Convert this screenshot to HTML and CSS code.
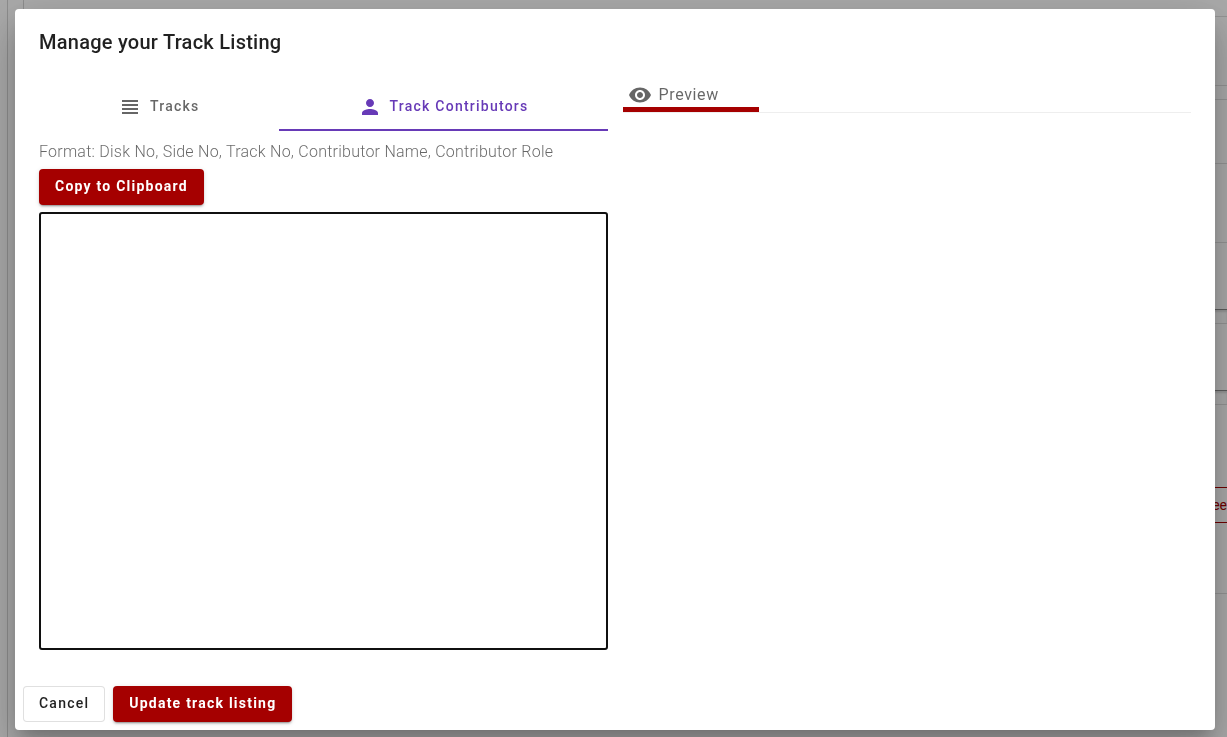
FILE: index.html
```html
<!DOCTYPE html>
<html lang="en">
<head>
<meta charset="utf-8">
<title>Manage your Track Listing</title>
<link rel="stylesheet" href="styles.css">
</head>
<body>
<div class="page" aria-hidden="true">
  <div class="page-card">
    <div class="band band-header"></div>
    <div class="band band-gap"></div>
    <div class="band band-row"></div>
    <div class="band band-wide"></div>
    <div class="band band-field"></div>
    <div class="band band-gap band-shaded"></div>
    <div class="band band-field"></div>
    <div class="band band-gap band-shaded"></div>
    <div class="band band-action"><span class="page-action">ee</span></div>
    <div class="band"></div>
  </div>
</div>
<div class="overlay">
  <div class="dialog" role="dialog" aria-labelledby="dialog-title">
    <h2 class="dialog-title" id="dialog-title">Manage your Track Listing</h2>
    <div class="dialog-content">
      <section class="editor">
        <div class="tabs" role="tablist">
          <button class="tab" type="button" role="tab" aria-selected="false">
            <svg class="icon" viewBox="0 0 24 24" aria-hidden="true"><path d="M4 16h16v-2H4v2zm0 4h16v-2H4v2zm0-8h16v-2H4v2zm0-6v2h16V6H4z"/></svg>
            <span>Tracks</span>
          </button>
          <button class="tab tab-active" type="button" role="tab" aria-selected="true">
            <svg class="icon" viewBox="0 0 24 24" aria-hidden="true"><path d="M12 13c2.210 0 4-1.790 4-4s-1.790-4-4-4-4 1.790-4 4 1.790 4 4 4zm0 2c-2.670 0-8 1.340-8 4v2h16v-2c0-2.660-5.330-4-8-4z"/></svg>
            <span>Track Contributors</span>
          </button>
        </div>
        <label class="format" for="contributors">Format: Disk No, Side No, Track No, Contributor Name, Contributor Role</label>
        <button class="button button-primary" type="button">Copy to Clipboard</button>
        <textarea class="listing" id="contributors"></textarea>
      </section>
      <section class="preview">
        <div class="preview-bar">
          <h3 class="preview-title">
            <svg class="icon" viewBox="0 0 24 24" aria-hidden="true"><path d="M12 4.500C7 4.500 2.730 7.610 1 12c1.730 4.390 6 7.500 11 7.500s9.270-3.110 11-7.500c-1.730-4.390-6-7.500-11-7.500zM12 17c-2.760 0-5-2.240-5-5s2.240-5 5-5 5 2.240 5 5-2.240 5-5 5zm0-8c-1.660 0-3 1.340-3 3s1.340 3 3 3 3-1.340 3-3-1.340-3-3-3z"/></svg>
            <span>Preview</span>
          </h3>
        </div>
      </section>
    </div>
    <div class="dialog-actions">
      <button class="button button-outline" type="button">Cancel</button>
      <button class="button button-primary" type="button">Update track listing</button>
    </div>
  </div>
</div>
</body>
</html>
```
FILE: styles.css
```css
* { box-sizing: border-box; }

body {
  margin: 0;
  height: 100vh;
  overflow: hidden;
  background: #fafafa;
  color: rgba(0, 0, 0, 0.87);
  font-family: Roboto, "Liberation Sans", sans-serif;
}

.page {
  height: 100%;
  margin-left: 7px;
  border-left: 1px solid #d0d0d0;
}

.page-card {
  display: flex;
  flex-direction: column;
  height: 100%;
  padding: 16px 0 0 16px;
  background: linear-gradient(#d0d0d0, #d0d0d0) 15px 0 / 1px 12px no-repeat;
}

.band {
  flex: 1;
  border-top: 1px solid #dadada;
}
.band-header { flex: 0 0 69px; }
.band-gap { flex: 0 0 14px; }
.band-row { flex: 0 0 64px; }
.band-wide { flex: 0 0 79px; }
.band-field { flex: 0 0 67px; }
.band-shaded {
  border-top: 1px solid #888;
  box-shadow: inset 0 2px 2px #d8d8d8;
}
.band-action {
  display: flex;
  justify-content: flex-end;
  flex: 0 0 189px;
  padding-top: 82px;
}

.page-action {
  height: 36px;
  padding-left: 20px;
  border: solid #a50000;
  border-width: 1px 0;
  color: #a50000;
  font-size: 14px;
  line-height: 34px;
}

.overlay {
  position: fixed;
  inset: 0;
  display: flex;
  padding: 9px 12px 7px 15px;
  background: rgba(0, 0, 0, 0.32);
}

.dialog {
  display: flex;
  flex: 1;
  flex-direction: column;
  border-radius: 4px;
  background: #fff;
  box-shadow: 0 11px 15px -7px rgba(0, 0, 0, 0.2),
    0 24px 38px 3px rgba(0, 0, 0, 0.14),
    0 9px 46px 8px rgba(0, 0, 0, 0.12);
}

.dialog-title {
  margin: 0;
  padding: 17px 24px 25px;
  font-size: 20px;
  font-weight: 500;
  line-height: 32px;
  letter-spacing: 0.0125em;
}

.dialog-content {
  display: grid;
  grid-template-columns: 1fr 1fr;
  flex: 1;
  gap: 15px;
  padding: 0 24px;
}

.editor {
  display: flex;
  flex-direction: column;
  align-items: flex-start;
}

.tabs {
  display: flex;
  width: 100%;
  height: 48px;
}

.tab {
  display: flex;
  flex: 1 1 auto;
  align-items: center;
  justify-content: center;
  gap: 8px;
  padding: 0 24px;
  border: 0;
  border-bottom: 2px solid transparent;
  background: none;
  color: rgba(0, 0, 0, 0.6);
  font: 500 14px/20px Roboto, "Liberation Sans", sans-serif;
  letter-spacing: 0.088em;
}
.tab-active {
  border-color: #673ab7;
  color: #673ab7;
}

.icon {
  width: 24px;
  height: 24px;
  fill: currentColor;
}

.format {
  padding: 9px 0 5px;
  color: rgba(0, 0, 0, 0.6);
  font-size: 16px;
  font-weight: 300;
  line-height: 24px;
  letter-spacing: 0.015em;
}

.button {
  height: 36px;
  padding: 0 16px 2px;
  border: 0;
  border-radius: 4px;
  font: 500 14px/34px Roboto, "Liberation Sans", sans-serif;
  letter-spacing: 0.088em;
}
.button-primary {
  background: #a50000;
  color: #fff;
  font-weight: 700;
  box-shadow: 0 3px 1px -2px rgba(0, 0, 0, 0.2),
    0 2px 2px rgba(0, 0, 0, 0.14),
    0 1px 5px rgba(0, 0, 0, 0.12);
}
.button-outline {
  padding: 0 15px 2px;
  border: 1px solid rgba(0, 0, 0, 0.12);
  background: #fff;
  color: rgba(0, 0, 0, 0.87);
  line-height: 32px;
}

.listing {
  flex: 1;
  width: 100%;
  margin-top: 7px;
  border: 2px solid #101010;
  border-radius: 3px;
  outline: 0;
  background: #fff;
  resize: none;
}

.preview-bar {
  display: flex;
  border-bottom: 1px solid #eee;
}

.preview-title {
  display: flex;
  align-items: center;
  gap: 7px;
  width: 136px;
  height: 29px;
  margin: 0;
  padding-left: 5px;
  border-bottom: 5px solid #a50000;
  color: rgba(0, 0, 0, 0.6);
  font-size: 16px;
  font-weight: 400;
  line-height: 22px;
  letter-spacing: 0.04em;
}

.dialog-actions {
  display: flex;
  gap: 8px;
  padding: 36px 8px 8px;
}
```
